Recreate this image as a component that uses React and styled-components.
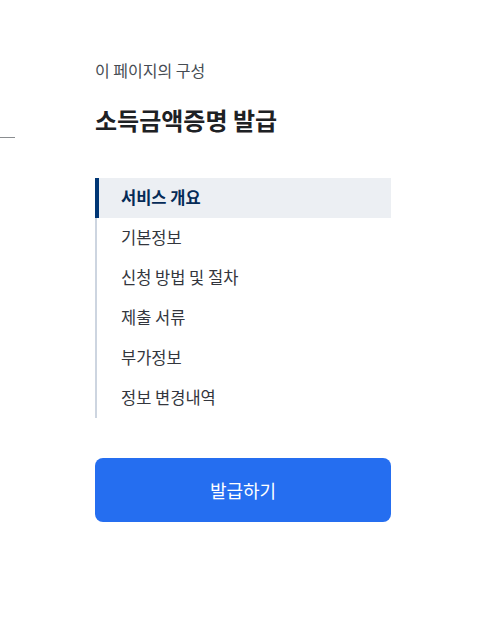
import React from "react";
import styled, { createGlobalStyle } from "styled-components";

const GlobalStyle = createGlobalStyle`
  body {
    margin: 0;
    background: #fff;
    font-family: "Noto Sans CJK KR", "Noto Sans", sans-serif;
    color: #1e2124;
  }
`;

export const Page = styled.div`
  display: flex;
  width: 482px;
  min-height: 623px;
`;

export const Gutter = styled.div`
  width: 95px;
  flex-shrink: 0;
`;

export const Rule = styled.div`
  width: 15px;
  height: 1px;
  margin-top: 137px;
  background: #8a8d90;
`;

export const Aside = styled.aside`
  width: 296px;
  padding-top: 58px;
`;

export const Caption = styled.p`
  margin: 0;
  font-size: 16px;
  line-height: 24px;
  color: #464c53;
`;

export const Title = styled.h2`
  margin: 22px 0 0;
  font-size: 24px;
  line-height: 32px;
  font-weight: 700;
  color: #1e2124;
`;

export const Nav = styled.ul`
  list-style: none;
  margin: 42px 0 0;
  padding: 0;
  border-left: 2px solid #cdd5e0;
`;

export const Item = styled.li`
  display: flex;
  align-items: center;
  height: 40px;
  padding-bottom: 2px;
  box-sizing: border-box;
  margin-left: ${(p) => (p.$active ? "-2px" : "0")};
  padding-left: ${(p) => (p.$active ? "22px" : "24px")};
  border-left: ${(p) => (p.$active ? "4px solid #003675" : "none")};
  background: ${(p) => (p.$active ? "#eceff3" : "transparent")};
  font-size: 16.5px;
  font-weight: ${(p) => (p.$active ? 700 : 400)};
  color: ${(p) => (p.$active ? "#052b57" : "#33363d")};
`;

export const IssueButton = styled.button`
  display: block;
  width: 100%;
  height: 64px;
  margin-top: 40px;
  border: none;
  border-radius: 8px;
  background: #256ef0;
  color: #fff;
  font-family: inherit;
  font-size: 18px;
  font-weight: 400;
  cursor: pointer;
`;

const sections = [
  "서비스 개요",
  "기본정보",
  "신청 방법 및 절차",
  "제출 서류",
  "부가정보",
  "정보 변경내역",
];

const App = () => {
  return (
    <>
      <GlobalStyle />
      <Page>
        <Gutter>
          <Rule />
        </Gutter>
        <Aside>
          <Caption>이 페이지의 구성</Caption>
          <Title>소득금액증명 발급</Title>
          <Nav>
            {sections.map((name, i) => (
              <Item key={name} $active={i === 0}>
                {name}
              </Item>
            ))}
          </Nav>
          <IssueButton>발급하기</IssueButton>
        </Aside>
      </Page>
    </>
  );
};

export default App;
